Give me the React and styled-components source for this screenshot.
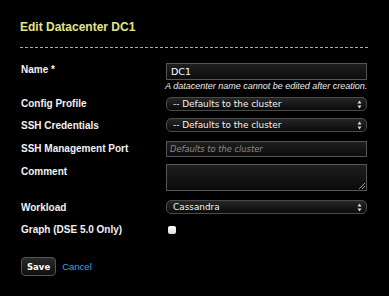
import React from 'react'
import styled, { createGlobalStyle } from 'styled-components'

const GlobalStyle = createGlobalStyle`
  html, body {
    margin: 0;
    padding: 0;
    background: #000;
  }
  body {
    font-family: "Liberation Sans", Arial, sans-serif;
    color: #fff;
  }
`

const Dialog = styled.div`
  width: 389px;
  height: 296px;
  background: #000;
  padding: 19px 21px 0 20px;
  box-sizing: border-box;
`

const Title = styled.h3`
  margin: 0;
  font-size: 12px;
  font-weight: bold;
  color: #e4e48a;
  line-height: 16px;
  padding-bottom: 12px;
  border-bottom: 1px dashed #aaa;
`

const Form = styled.div`
  margin-top: 15px;
  padding-left: 1px;
`

const Row = styled.div`
  display: grid;
  grid-template-columns: 145px 201px;
  align-items: start;
  height: ${p => p.$h}px;
`

const Label = styled.div`
  font-size: 10px;
  font-weight: bold;
  color: #f2f2f2;
  line-height: ${p => p.$lh || 14}px;
  padding-top: ${p => p.$pt || 0}px;
  white-space: nowrap;
`

const TextInput = styled.div`
  height: ${p => p.$h || 17}px;
  box-sizing: border-box;
  border: 1px solid #555;
  background: linear-gradient(#1e1e1e, #0c0c0c);
  font-family: "DejaVu Sans", sans-serif;
  font-size: ${p => (p.$placeholder ? 8.3 : 9.5)}px;
  line-height: ${p => (p.$h || 17) - 2}px;
  padding-left: ${p => (p.$placeholder ? 3 : 4)}px;
  color: ${p => (p.$placeholder ? '#8a8a8a' : '#fff')};
  font-style: ${p => (p.$placeholder ? 'italic' : 'normal')};
`

const Help = styled.div`
  font-size: 9px;
  font-style: italic;
  color: #eee;
  line-height: 12px;
  margin-left: -1px;
  white-space: nowrap;
`

const Select = styled.div`
  height: 14px;
  box-sizing: border-box;
  border: 1px solid #4a4a4a;
  border-radius: 5px;
  background: linear-gradient(#262626, #0a0a0a);
  display: flex;
  align-items: center;
  justify-content: space-between;
  padding: 0 4px 0 6px;
  font-family: "DejaVu Sans", sans-serif;
  font-size: 8.9px;
  color: #f4f4f4;
`

const TextArea = styled.div`
  height: 27px;
  box-sizing: border-box;
  border: 1px solid #555;
  background: linear-gradient(#1e1e1e, #0a0a0a);
  position: relative;
`

const Grip = styled.svg`
  position: absolute;
  right: 1px;
  bottom: 1px;
`

const Checkbox = styled.div`
  width: 8px;
  height: 8px;
  margin-left: 2px;
  border-radius: 2px;
  background: linear-gradient(#fff, #ddd);
`

const Actions = styled.div`
  display: flex;
  align-items: center;
  gap: 6px;
  margin-top: 23px;
  padding-left: 1px;
`

const Button = styled.button`
  height: 19px;
  padding: 0 5px;
  border: 1px solid #555;
  border-radius: 4px;
  background: linear-gradient(#2a2a2a, #0e0e0e);
  color: #fff;
  font-family: "DejaVu Sans", sans-serif;
  font-size: 8.5px;
  font-weight: bold;
`

const Link = styled.a`
  color: #2fa6ea;
  font-size: 9.5px;
  text-decoration: none;
`

const Arrows = () => (
  <svg width="5" height="9" viewBox="0 0 5 9">
    <path d="M2.5 0.5 L4.5 3.5 L0.5 3.5 Z" fill="#ddd" />
    <path d="M2.5 8.5 L4.5 5.5 L0.5 5.5 Z" fill="#ddd" />
  </svg>
)

const SelectBox = ({ children }) => (
  <Select>
    <span>{children}</span>
    <Arrows />
  </Select>
)

export default function App() {
  return (
    <Dialog>
      <GlobalStyle />
      <Title>Edit Datacenter DC1</Title>
      <Form>
        <Row $h={34}>
          <Label $lh={14}>Name *</Label>
          <div>
            <TextInput>DC1</TextInput>
            <Help>A datacenter name cannot be edited after creation.</Help>
          </div>
        </Row>

        <Row $h={21}>
          <Label>Config Profile</Label>
          <SelectBox>-- Defaults to the cluster</SelectBox>
        </Row>

        <Row $h={23}>
          <Label $pt={1}>SSH Credentials</Label>
          <SelectBox>-- Defaults to the cluster</SelectBox>
        </Row>

        <Row $h={23}>
          <Label $pt={1}>SSH Management Port</Label>
          <TextInput $placeholder $h={16}>Defaults to the cluster</TextInput>
        </Row>

        <Row $h={36}>
          <Label $pt={1}>Comment</Label>
          <TextArea>
            <Grip width="6" height="6" viewBox="0 0 6 6">
              <path d="M6 0 L0 6 M6 3 L3 6" stroke="#999" strokeWidth="1" />
            </Grip>
          </TextArea>
        </Row>

        <Row $h={26}>
          <Label $pt={1}>Workload</Label>
          <SelectBox>Cassandra</SelectBox>
        </Row>

        <Row $h={8}>
          <Label $lh={8} $pt={0}>Graph (DSE 5.0 Only)</Label>
          <Checkbox />
        </Row>
      </Form>
      <Actions>
        <Button>Save</Button>
        <Link href="#">Cancel</Link>
      </Actions>
    </Dialog>
  )
}
